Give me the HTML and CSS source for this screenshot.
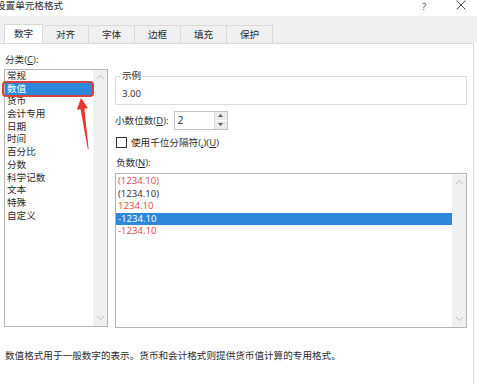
FILE: index.html
```html
<!DOCTYPE html>
<html lang="zh-CN">
<head>
<meta charset="utf-8">
<title>设置单元格格式</title>
<link rel="stylesheet" href="styles.css">
</head>
<body>
<div class="window">
  <div class="titlebar">
    <span class="title">设置单元格格式</span>
    <span class="help">?</span>
    <svg class="close" width="10" height="10" viewBox="0 0 10 10"><path d="M0.5 0.5L9.5 9.5M9.5 0.5L0.5 9.5" stroke="#333" stroke-width="0.9" fill="none"/></svg>
  </div>
  <div class="tabstrip">
    <div class="tab active">数字</div>
    <div class="tab">对齐</div>
    <div class="tab">字体</div>
    <div class="tab">边框</div>
    <div class="tab">填充</div>
    <div class="tab">保护</div>
  </div>
  <div class="panel">
    <div class="columns">
      <div class="left">
        <div class="label">分类(<u>C</u>):</div>
        <div class="listbox cat">
          <ul class="items">
            <li>常规</li>
            <li class="sel">数值</li>
            <li>货币</li>
            <li>会计专用</li>
            <li>日期</li>
            <li>时间</li>
            <li>百分比</li>
            <li>分数</li>
            <li>科学记数</li>
            <li>文本</li>
            <li>特殊</li>
            <li>自定义</li>
          </ul>
          <div class="scrollbar">
            <svg width="9" height="6" viewBox="0 0 9 6"><polyline points="1,5 4.5,1.5 8,5" fill="none" stroke="#bdbdbd" stroke-width="1"/></svg>
            <svg width="9" height="6" viewBox="0 0 9 6"><polyline points="1,1 4.5,4.5 8,1" fill="none" stroke="#bdbdbd" stroke-width="1"/></svg>
          </div>
          <div class="callout"></div>
          <svg class="arrow" width="100" height="90" viewBox="0 0 100 90"><polygon points="76,28 83,38.2 79.4,38.5 83.6,79 82.8,79 75.6,39.2 71.8,39.8" fill="#e8342b"/></svg>
        </div>
      </div>
      <div class="right">
        <fieldset class="sample">
          <legend>示例</legend>
          <div class="sample-value">3.00</div>
        </fieldset>
        <div class="row decimals">
          <span>小数位数(<u>D</u>):</span>
          <div class="spin">
            <div class="spin-input">2</div>
            <div class="spin-btns">
              <div class="spin-btn"><svg width="5" height="3" viewBox="0 0 5 3"><polygon points="0,3 2.5,0 5,3" fill="#555"/></svg></div>
              <div class="spin-btn"><svg width="5" height="3" viewBox="0 0 5 3"><polygon points="0,0 2.5,3 5,0" fill="#555"/></svg></div>
            </div>
          </div>
        </div>
        <div class="row check">
          <span class="box"></span>
          <span>使用千位分隔符(<u>,</u>)(<u>U</u>)</span>
        </div>
        <div class="label neg-label">负数(<u>N</u>):</div>
        <div class="listbox neg">
          <ul class="items">
            <li class="red">(1234.10)</li>
            <li>(1234.10)</li>
            <li class="red">1234.10</li>
            <li class="sel">-1234.10</li>
            <li class="red">-1234.10</li>
          </ul>
          <div class="scrollbar">
            <svg width="9" height="6" viewBox="0 0 9 6"><polyline points="1,5 4.5,1.5 8,5" fill="none" stroke="#bdbdbd" stroke-width="1"/></svg>
            <svg width="9" height="6" viewBox="0 0 9 6"><polyline points="1,1 4.5,4.5 8,1" fill="none" stroke="#bdbdbd" stroke-width="1"/></svg>
          </div>
        </div>
      </div>
    </div>
    <p class="desc">数值格式用于一般数字的表示。货币和会计格式则提供货币值计算的专用格式。</p>
  </div>
</div>
</body>
</html>
```

FILE: styles.css
```css
* { box-sizing: border-box; }
html, body {
  margin: 0;
  padding: 0;
  background: #ffffff;
}
body {
  width: 477px;
  height: 384px;
  overflow: hidden;
  font-family: "Open Sans", "Noto Sans CJK SC", sans-serif;
  font-size: 9.6px;
  color: #2b2b2b;
}
u { text-underline-offset: 1px; }
ul { margin: 0; padding: 0; list-style: none; }

.window { width: 477px; height: 384px; display: flex; flex-direction: column; }

.titlebar {
  height: 16px;
  display: flex;
  align-items: center;
  background: #ffffff;
}
.title { margin-left: -4px; line-height: 12px; margin-top: -4px; }
.help { margin-left: auto; margin-right: 30px; margin-top: -3px; line-height: 12px; color: #444; font-size: 9.5px; }
.close { margin-right: 11px; margin-top: -6px; }

.tabstrip {
  height: 27px;
  background: #f0f0f0;
  display: flex;
  align-items: flex-end;
  padding-left: 4px;
}
.tab {
  height: 19px;
  width: 46px;
  display: flex;
  align-items: center;
  justify-content: center;
  border: 1px solid #d9d9d9;
  border-left: none;
  border-bottom: none;
  background: #f0f0f0;
  margin-bottom: -1px;
  line-height: 12px;
  padding-bottom: 1px;
}
.tab.active {
  width: 39px;
  background: #ffffff;
  border-left: 1px solid #d9d9d9;
  height: 20px;
}

.panel {
  flex: 1;
  width: 474px;
  border-top: 1px solid #dadada;
  border-right: 1px solid #dadada;
  padding: 9px 0 0 4px;
  background: #ffffff;
}
.columns { display: flex; gap: 7px; }
.left { width: 104px; display: flex; flex-direction: column; }
.label { height: 14px; line-height: 14px; padding-left: 1px; }
.right { width: 352px; padding-top: 16px; display: flex; flex-direction: column; }

.listbox {
  display: flex;
  border: 1px solid #b4b4b4;
  background: #ffffff;
  position: relative;
}
.listbox .items { flex: 1; }
.listbox li { line-height: 12.7px; height: 12.7px; padding-left: 2px; white-space: nowrap; }
.listbox li.sel { background: #2d88dc; color: #ffffff; }
.listbox li.red { color: #e2454d; }
.scrollbar {
  width: 14px;
  background: #f0f0f0;
  display: flex;
  flex-direction: column;
  justify-content: space-between;
  align-items: center;
  padding: 4px 0 5px;
}
.cat { height: 258px; margin-top: 2px; }

.callout {
  position: absolute;
  left: -3px;
  top: 11px;
  width: 92px;
  height: 16px;
  border: 2px solid #d8423c;
  border-radius: 4px;
}
.arrow { position: absolute; left: 0; top: 0; }

.sample {
  margin: 0;
  padding: 0 0 3px 6px;
  border: 1px solid #dcdcdc;
  height: 36px;
}
.sample legend { padding: 0 2px; margin-left: -2px; line-height: 14px; }
.sample-value { line-height: 14px; padding-top: 4px; }

.row { display: flex; align-items: center; }
.decimals { margin-top: 5px; height: 20px; gap: 4px; }
.spin { display: flex; width: 54px; height: 19px; border: 1px solid #c4c4c4; margin-left: 1px; }
.spin-input { flex: 1; padding-left: 3px; line-height: 17px; font-size: 10.5px; }
.spin-btns { width: 13px; display: flex; flex-direction: column; border-left: 1px solid #dcdcdc; }
.spin-btn { flex: 1; background: #ebebeb; display: flex; align-items: center; justify-content: center; border-bottom: 1px solid #ffffff; }
.spin-btn:last-child { border-bottom: none; }

.check { margin-top: 5px; height: 14px; gap: 4px; padding-left: 1px; }
.box { width: 11px; height: 11px; border: 1px solid #333; background: #fff; }

.neg-label { margin-top: 7px; }
.neg { height: 155px; margin-top: 3px; padding-top: 1px; }
.neg li { height: 12.5px; line-height: 12.5px; }

.desc { margin: 21px 0 0 1px; line-height: 14px; }
```
